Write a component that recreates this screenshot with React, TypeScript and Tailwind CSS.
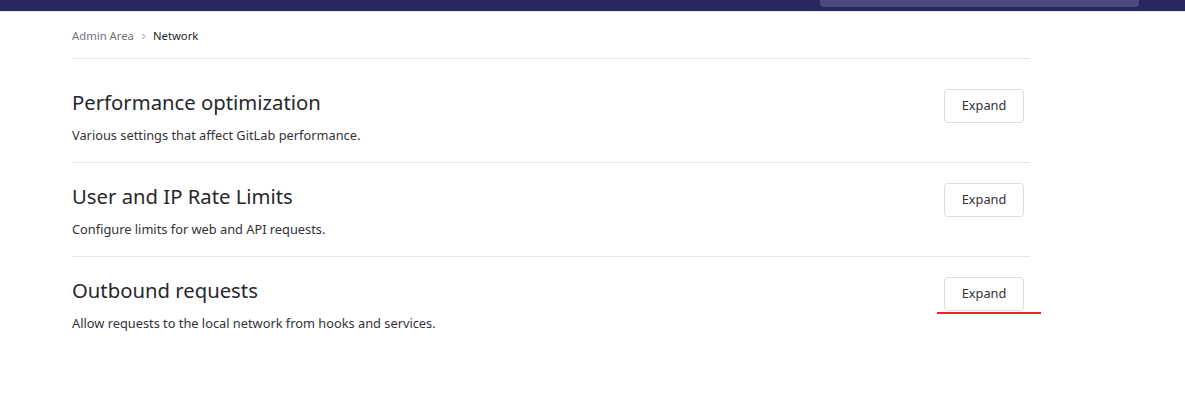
import React from "react";

interface SettingsSection {
  title: string;
  description: string;
  marked?: boolean;
}

const sections: SettingsSection[] = [
  {
    title: "Performance optimization",
    description: "Various settings that affect GitLab performance.",
  },
  {
    title: "User and IP Rate Limits",
    description: "Configure limits for web and API requests.",
  },
  {
    title: "Outbound requests",
    description: "Allow requests to the local network from hooks and services.",
    marked: true,
  },
];

const App: React.FC = () => {
  return (
    <div
      className="min-h-[396px] bg-white text-[#333238]"
      style={{ fontFamily: '"Noto Sans", "Open Sans", sans-serif' }}
    >
      {/* top bar */}
      <div className="h-[12px] bg-[#292961] border-b border-[#e4e4ee] flex">
        <div className="ml-[820px] w-[319px] h-[7px] bg-[#4b4b7d] rounded-b-[4px]" />
      </div>

      <div className="ml-[72px] w-[958px]">
        {/* breadcrumb */}
        <div className="flex items-center pt-[14px] pb-[12px] border-b border-[#e6e6e6] text-[11.3px] leading-5">
          <span className="text-[#737278]">Admin Area</span>
          <svg
            viewBox="0 0 16 16"
            className="w-[9px] h-[9px] mx-[5px] text-[#737278]"
            fill="none"
            stroke="currentColor"
            strokeWidth={1.6}
          >
            <path d="M6 3.5L10.5 8L6 12.5" />
          </svg>
          <span className="text-[#1f1e24]">Network</span>
        </div>

        {sections.map((section, index) => (
          <div
            key={section.title}
            className={`flex items-start justify-between pr-[6px] border-b ${
              index === sections.length - 1 ? "border-transparent" : "border-[#e6e6e6]"
            } ${index === 0 ? "pt-[29px]" : "pt-[19px]"} pb-[17px]`}
          >
            <div>
              <h4 className="text-[20.3px] leading-7 font-normal text-[#28272d]">
                {section.title}
              </h4>
              <p className="mt-[9px] text-[12.8px] leading-5 text-[#333238]">
                {section.description}
              </p>
            </div>
            <div className="relative mt-px">
              <button className="w-[80px] h-[34px] rounded-[4px] border border-[#dcdcde] bg-white text-[12.8px] text-[#333238]">
                Expand
              </button>
              {section.marked && (
                <div className="absolute left-[-7px] top-[35px] w-[104px] h-[2px] bg-[#f5222d]" />
              )}
            </div>
          </div>
        ))}
      </div>
    </div>
  );
};

export default App;
